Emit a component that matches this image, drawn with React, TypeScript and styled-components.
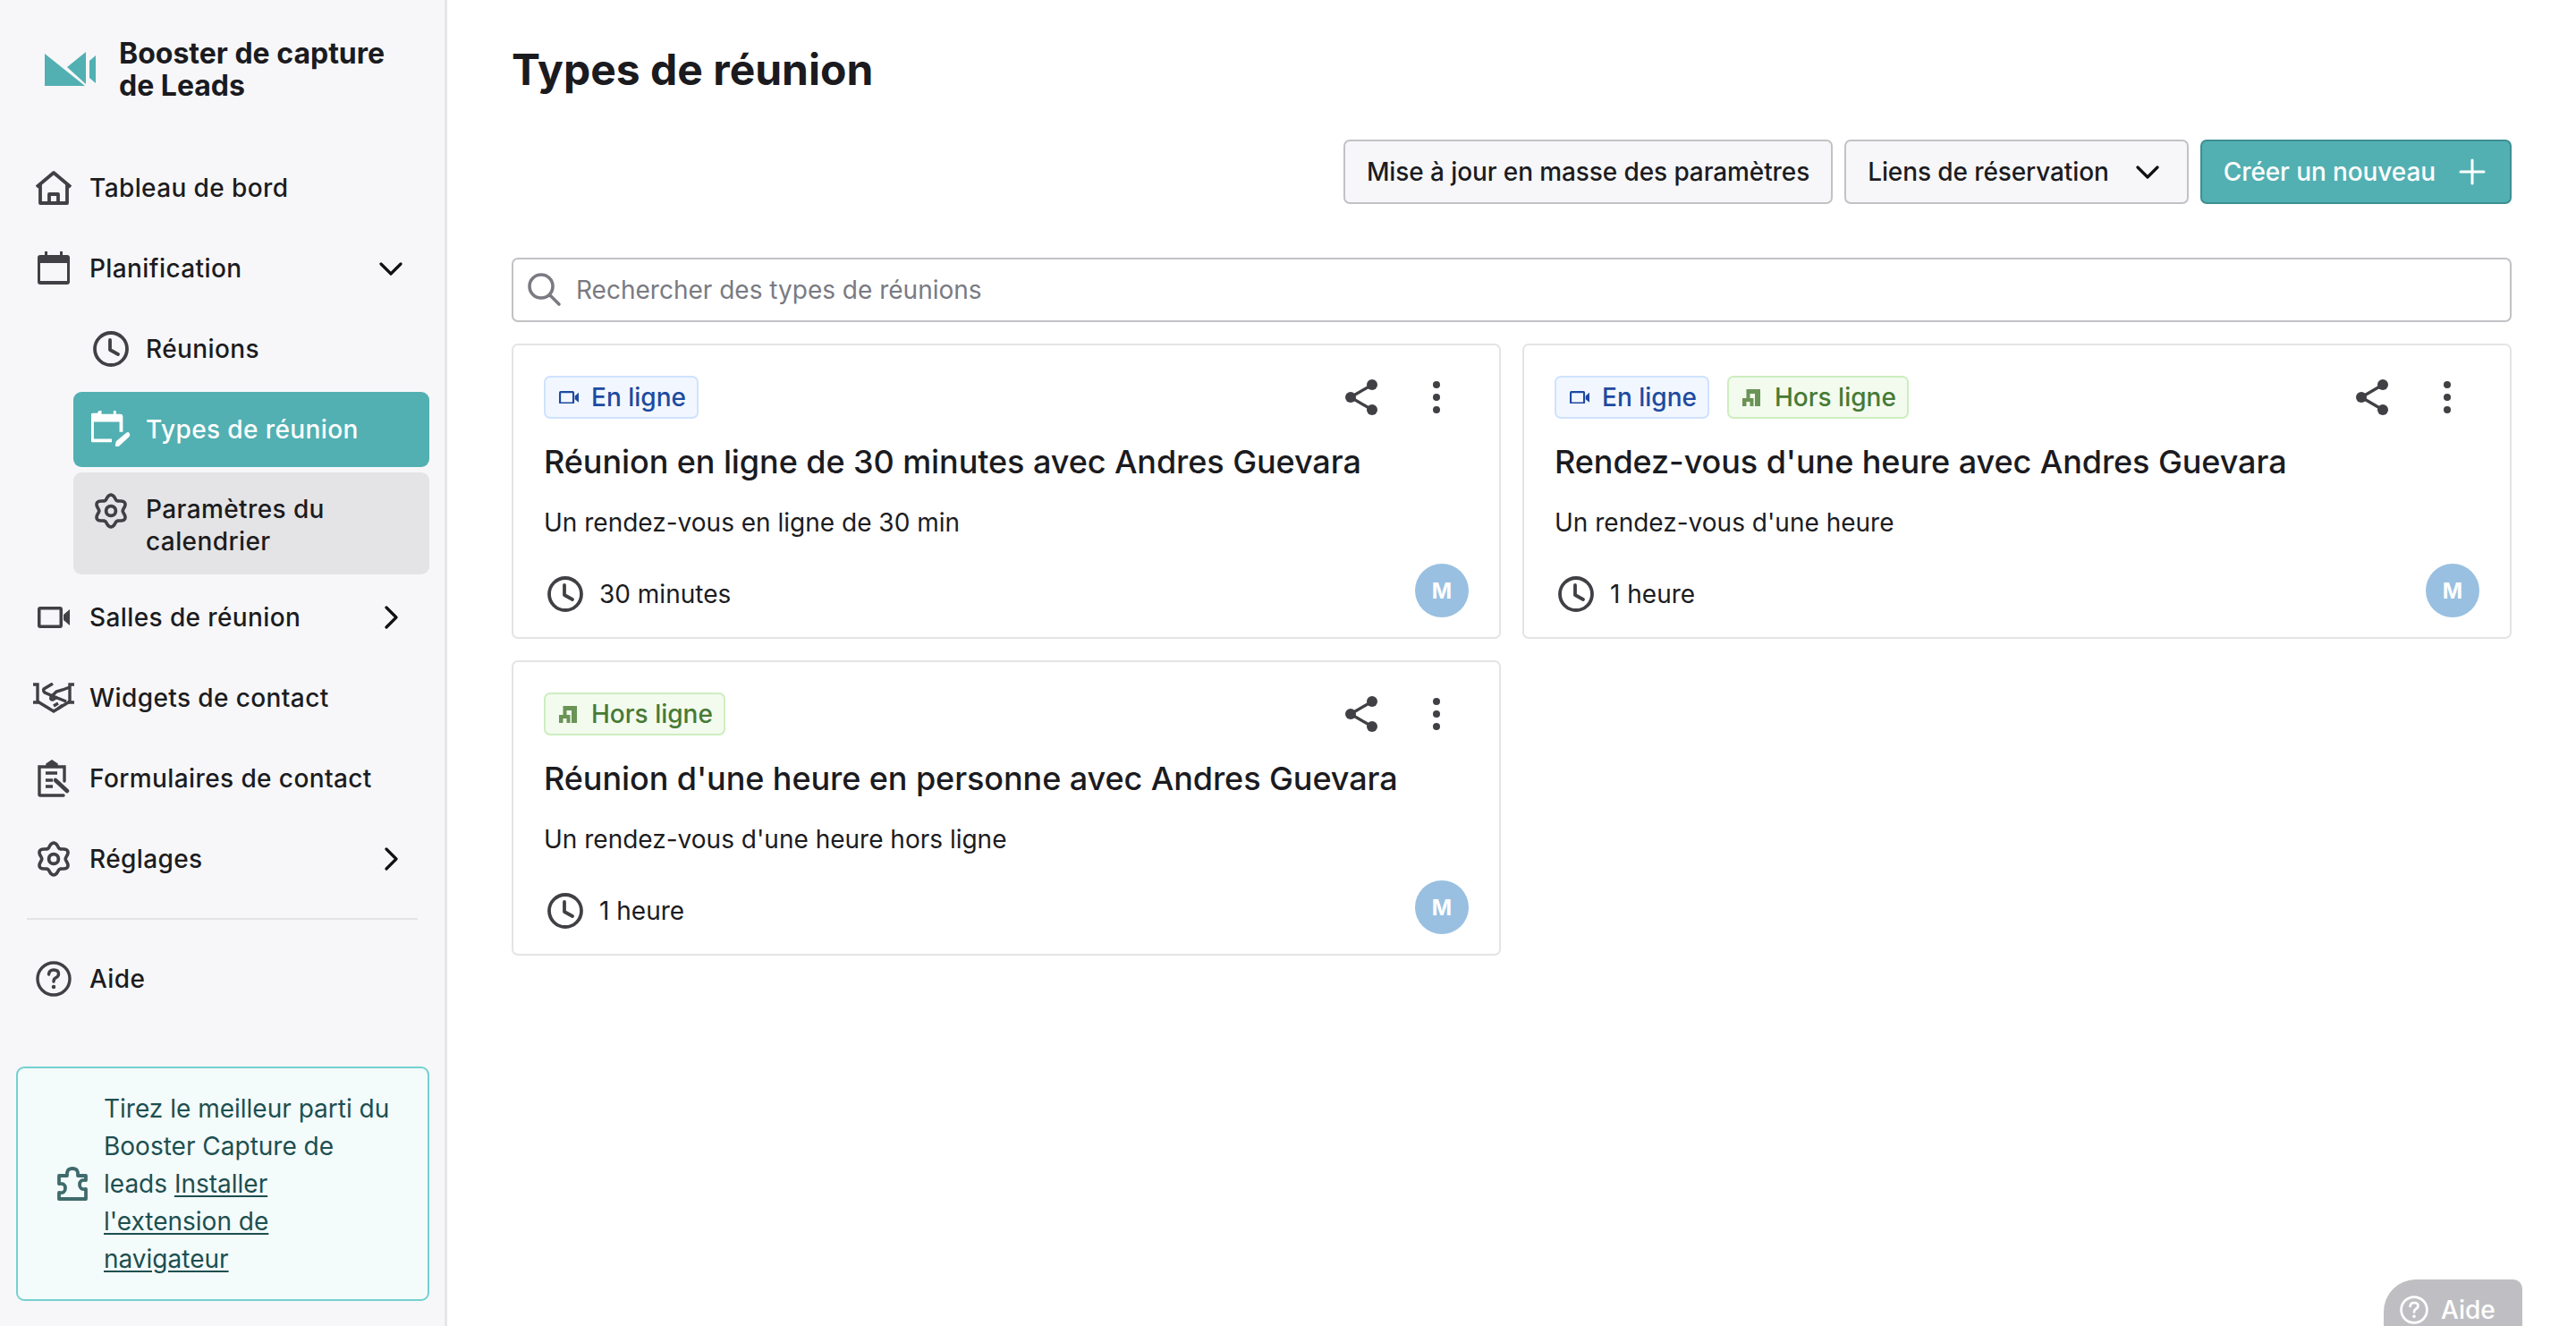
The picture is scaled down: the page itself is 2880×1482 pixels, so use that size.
import React from "react";
import styled, { createGlobalStyle } from "styled-components";

const GlobalStyle = createGlobalStyle`
  html, body {
    margin: 0;
    padding: 0;
    background: #fff;
    overflow: hidden;
  }
  body {
    font-family: Inter, "Noto Sans", "Liberation Sans", sans-serif;
    color: #1c1c1f;
  }
  * { box-sizing: border-box; }
`;

const Page = styled.div`
  display: grid;
  grid-template-columns: 500px 1fr;
  width: 2880px;
  height: 1482px;
`;

/* Sidebar */

const Sidebar = styled.aside`
  background: #f7f7f9;
  border-right: 3px solid #e6e6e8;
  height: 1482px;
  overflow: hidden;
`;
const Brand = styled.div`
  display: flex;
  align-items: center;
  gap: 25px;
  height: 156px;
  padding-left: 50px;
`;
const BrandName = styled.div`
  width: 330px;
  font-size: 32px;
  line-height: 36px;
  font-weight: 700;
  color: #1b1b1f;
`;
const NavList = styled.nav`
  padding-top: 9px;
`;
const NavRow = styled.div`
  display: flex;
  align-items: center;
  height: 90px;
  padding: 0 30px;
  font-size: 28px;
  letter-spacing: 0.4px;
  font-weight: 500;
`;
const IconSlot = styled.span`
  display: flex;
  justify-content: center;
  align-items: center;
  flex: 0 0 60px;
  width: 60px;
  margin-right: 10px;
  color: #404045;
`;
const NavLabel = styled.span`
  flex: 1;
`;
const Chevron = styled.svg`
  width: 26px;
  height: 26px;
  margin-right: 17px;
  fill: none;
  stroke: #111114;
  stroke-width: 3.2;
  stroke-linecap: round;
  stroke-linejoin: round;
`;
const SubMenu = styled.div`
  display: flex;
  flex-direction: column;
  gap: 6px;
  margin: 3px 17px 3px 82px;
`;
const SubItem = styled.div<{ $state?: "active" | "muted" }>`
  display: flex;
  align-items: ${({ $state }) => ($state === "muted" ? "flex-start" : "center")};
  height: ${({ $state }) => ($state === "muted" ? "114px" : "84px")};
  padding: ${({ $state }) => ($state === "muted" ? "23px" : "0")} 20px 0 16px;
  border-radius: 9px;
  font-size: 28px;
  letter-spacing: 0.4px;
  line-height: 36px;
  font-weight: 500;
  background: ${({ $state }) =>
    $state === "active" ? "#52b0b2" : $state === "muted" ? "#e4e4e6" : "transparent"};
  color: ${({ $state }) => ($state === "active" ? "#fff" : "#1c1c1f")};
`;
const SubIcon = styled.span<{ $light?: boolean }>`
  display: flex;
  justify-content: center;
  flex: 0 0 52px;
  width: 52px;
  margin-right: 13px;
  color: ${({ $light }) => ($light ? "#fff" : "#404045")};
`;
const Divider = styled.hr`
  border: 0;
  height: 2px;
  margin: 21px 30px;
  background: #e4e4e6;
`;
const PromoBox = styled.div`
  display: flex;
  align-items: center;
  width: 462px;
  height: 262px;
  margin: 53px 0 0 18px;
  padding-left: 44px;
  background: #f3fbfb;
  border: 2px solid #74d0d0;
  border-radius: 9px;
  color: #1d4f50;
`;
const PromoIcon = styled.span`
  flex: 0 0 36px;
  display: flex;
  margin-right: 16px;
`;
const PromoText = styled.div`
  width: 326px;
  font-size: 28px;
  line-height: 42px;
  a {
    color: inherit;
    text-decoration: underline;
    text-underline-offset: 3px;
  }
`;

/* Main area */

const Main = styled.main`
  padding: 0 72px 0 72px;
`;
const Title = styled.h1`
  margin: 0;
  padding-top: 43px;
  height: 156px;
  font-size: 48px;
  line-height: 70px;
  font-weight: 700;
  color: #1b1b1f;
`;
const Toolbar = styled.div`
  display: flex;
  justify-content: flex-end;
  gap: 13px;
  height: 72px;
`;
const ToolButton = styled.button<{ $primary?: boolean }>`
  display: flex;
  align-items: center;
  height: 72px;
  padding: 0 24px;
  font-family: inherit;
  font-size: 28px;
  letter-spacing: -0.1px;
  font-weight: 500;
  border-radius: 7px;
  border: 2px solid ${({ $primary }) => ($primary ? "#3d8f91" : "#c2c2c6")};
  background: ${({ $primary }) => ($primary ? "#52b0b2" : "#f7f7f9")};
  color: ${({ $primary }) => ($primary ? "#fff" : "#1c1c1f")};
`;
const ButtonIcon = styled.span<{ $wide?: boolean }>`
  display: flex;
  margin-left: ${({ $wide }) => ($wide ? "30px" : "26px")};
  svg {
    margin-right: ${({ $wide }) => ($wide ? "7px" : "3px")};
  }
`;
const SearchBar = styled.div`
  display: flex;
  align-items: center;
  gap: 16px;
  height: 72px;
  margin-top: 60px;
  padding-left: 16px;
  border: 2px solid #c2c2c6;
  border-radius: 7px;
  font-size: 28px;
  color: #7a7a82;
`;
const CardGrid = styled.section`
  display: grid;
  grid-template-columns: 1106px 1106px;
  gap: 24px;
  margin-top: 24px;
`;
const Card = styled.article`
  position: relative;
  height: 330px;
  padding: 34px 34px 0 34px;
  border: 2px solid #e4e4e6;
  border-radius: 7px;
  background: #fff;
`;
const CardHead = styled.div`
  display: flex;
  align-items: center;
  height: 48px;
`;
const Tags = styled.div`
  display: flex;
  gap: 20px;
  flex: 1;
`;
const Tag = styled.span<{ $tone: "blue" | "green" }>`
  display: inline-flex;
  align-items: center;
  gap: ${({ $tone }) => ($tone === "blue" ? "14px" : "16px")};
  height: 48px;
  padding: 0 12px 0 15px;
  font-size: 28px;
  font-weight: 500;
  border-radius: 7px;
  border: 2px solid ${({ $tone }) => ($tone === "blue" ? "#cfe2ff" : "#cdeebf")};
  background: ${({ $tone }) => ($tone === "blue" ? "#f2f7ff" : "#f3fbef")};
  color: ${({ $tone }) => ($tone === "blue" ? "#1e4aa0" : "#477a34")};
`;
const HeadActions = styled.div`
  display: flex;
  align-items: center;
  gap: 62px;
  margin-right: 32px;
  color: #404045;
`;
const CardTitle = styled.h2`
  margin: 23px 0 0;
  font-size: 36px;
  letter-spacing: -0.08px;
  line-height: 50px;
  font-weight: 500;
  color: #1b1b1f;
`;
const CardDesc = styled.p`
  margin: 23px 0 0;
  font-size: 28px;
  line-height: 40px;
  color: #1c1c1f;
`;
const Duration = styled.div`
  display: flex;
  align-items: center;
  gap: 18px;
  margin-top: 40px;
  padding-left: 4px;
  font-size: 28px;
  line-height: 40px;
  color: #404045;
`;
const DurationText = styled.span`
  color: #1c1c1f;
`;
const Avatar = styled.span`
  position: absolute;
  right: 34px;
  bottom: 22px;
  display: flex;
  align-items: center;
  justify-content: center;
  width: 60px;
  height: 60px;
  border-radius: 50%;
  background: #99c0e1;
  color: #fff;
  font-size: 24px;
  font-weight: 700;
`;
const HelpFab = styled.div`
  position: fixed;
  left: 2665px;
  top: 1430px;
  display: flex;
  align-items: center;
  gap: 14px;
  width: 155px;
  height: 68px;
  padding: 0 0 0 18px;
  border-radius: 36px 10px 0 0;
  background: #bfbfc3;
  color: #fff;
  font-size: 28px;
  font-weight: 500;
`;

/* Icons, drawn to follow the reference */

type IconProps = { size?: number };

const Line = styled.svg`
  fill: none;
  stroke: currentColor;
  stroke-width: 3;
  stroke-linecap: round;
  stroke-linejoin: round;
`;

// six lobed outline for the settings gear
const gearPoints = Array.from({ length: 72 }, (_, i) => {
  const angle = (i / 72) * Math.PI * 2;
  const radius = 15.6 + 2.4 * Math.cos(6 * angle);
  const x = 20 + radius * Math.sin(angle);
  const y = 20 - radius * Math.cos(angle);
  return `${x.toFixed(2)},${y.toFixed(2)}`;
}).join(" ");

const Logo = () => (
  <svg width="58" height="40" viewBox="0 0 58 40">
    <path d="M0 2 L45 38 L0 38Z" fill="#52b0b2" />
    <path d="M25 17 L46 0 L46 36Z" fill="#52b0b2" />
    <path d="M50 10 L57 4 L57 35 L50 29Z" fill="#52b0b2" />
  </svg>
);
const HomeIcon = () => (
  <Line width="42" height="38" viewBox="0 0 42 38">
    <path d="M2 18 L21 2 L40 18" strokeWidth="3.8" strokeLinecap="butt" />
    <path d="M6 15 V36 H36 V15" strokeWidth="3.8" strokeLinecap="butt" />
    <path d="M16 35 V26 H26 V35" strokeWidth="3.8" strokeLinecap="butt" />
  </Line>
);
const CalendarIcon = () => (
  <svg width="38" height="38" viewBox="0 0 38 38">
    <path
      d="M9 0 h3 v4 h14 v-4 h3 v4 h5 a3 3 0 0 1 3 3 v27 a3 3 0 0 1 -3 3 h-30 a3 3 0 0 1 -3 -3 v-27 a3 3 0 0 1 3 -3 h5z M4 13 v20 h30 v-20z"
      fill="currentColor"
      fillRule="evenodd"
    />
  </svg>
);
const CalendarEditIcon = () => (
  <svg width="44" height="42" viewBox="0 0 46 44">
    <path
      d="M9 0 h3 v4 h14 v-4 h3 v4 h5 a3 3 0 0 1 3 3 v18 h-4 v-12 h-30 v20 h21 v4 h-22 a3 3 0 0 1 -3 -3 v-28 a3 3 0 0 1 3 -3 h5z"
      fill="currentColor"
    />
    <path d="M28 41 L29 36 L41 26 Q44 24 45 27 Q46 29 44 31 L33 41 Q30 43 28 41Z" fill="currentColor" />
  </svg>
);
const ClockIcon = ({ size = 40 }: IconProps) => (
  <Line width={size} height={size} viewBox="0 0 40 40">
    <circle cx="20" cy="20" r="18" strokeWidth="3.8" />
    <path d="M19 10 V21 L28 26" strokeWidth="3.8" />
  </Line>
);
const GearIcon = () => (
  <Line width="40" height="40" viewBox="0 0 40 40">
    <polygon points={gearPoints} strokeWidth="3.6" />
    <circle cx="20" cy="20" r="5.4" strokeWidth="3.8" />
  </Line>
);
const VideoIcon = ({ size = 36 }: IconProps) => (
  <svg width={size} height={(size * 24) / 36} viewBox="0 0 36 24">
    <path
      d="M3 0 h22 a3 3 0 0 1 3 3 v18 a3 3 0 0 1 -3 3 h-22 a3 3 0 0 1 -3 -3 v-18 a3 3 0 0 1 3 -3z M3.500 3.500 v17 h21 v-17z"
      fill="currentColor"
      fillRule="evenodd"
    />
    <path d="M29 9 L36 3 V21 L29 15Z" fill="currentColor" />
  </svg>
);
const HandshakeIcon = () => (
  <Line width="48" height="34" viewBox="0 0 48 34">
    <g strokeWidth="3.4" strokeLinecap="butt" strokeLinejoin="miter">
      <path d="M1 2 H6 V22 H1" />
      <path d="M47 2 H42 V22 H47" />
      <path d="M6 21 L24 32 L42 21" />
      <path d="M23 1 L13 7 Q12 9 14 11 L23 15 L38 21" />
      <path d="M42 5 L34 8 L27 10 L21 16 Q20 19 23 19 L28 16" />
      <path d="M24 26 L29 23 M29 29 L34 25" />
    </g>
  </Line>
);
const FormIcon = () => (
  <svg width="36" height="42" viewBox="0 0 36 42" fill="none" stroke="currentColor" strokeWidth="3.400">
    <path d="M9 8 H2 V39 a1 1 0 0 0 1 1 H29" strokeLinecap="round" />
    <path d="M23 8 H30 V24" strokeLinecap="round" />
    <path d="M10 9 V5 L16 1 L22 5 V9 H10Z" fill="currentColor" strokeWidth="1.500" />
    <path d="M9 15 H22 M9 23 H17 M9 30 H17" strokeWidth="3.400" />
    <path d="M20 23 L33 35" strokeWidth="4.500" strokeLinecap="round" />
  </svg>
);
const HelpCircle = ({ size = 40 }: IconProps) => (
  <Line width={size} height={size} viewBox="0 0 40 40">
    <circle cx="20" cy="20" r="18" strokeWidth="3.400" />
    <path d="M14.500 15 Q15 10 20 10 Q25.500 10 25.500 14.500 Q25.500 17.500 22 19 Q20 20 20 23" strokeWidth="3.400" />
    <circle cx="20" cy="29" r="1.500" fill="currentColor" strokeWidth="1.500" />
  </Line>
);
const PuzzleIcon = () => (
  <svg width="34" height="38" viewBox="0 0 34 38" fill="none" stroke="#3f6b6c" strokeWidth="3.800" strokeLinejoin="round">
    <path d="M2 10 H11 Q10 2 17 2 Q24 2 23 10 H32 V15 Q25 14 25 20 Q25 26 32 25 V36 H2 V29 Q9 30 9 24 Q9 18 2 19Z" />
  </svg>
);
const ShareIcon = () => (
  <svg width="36" height="40" viewBox="0 0 36 40" fill="#404045">
    <circle cx="6" cy="20" r="6" />
    <circle cx="30" cy="6" r="6" />
    <circle cx="30" cy="34" r="6" />
    <path d="M6 20 L30 6 M6 20 L30 34" stroke="#404045" strokeWidth="3.200" />
  </svg>
);
const MoreIcon = () => (
  <svg width="8" height="36" viewBox="0 0 8 36" fill="#404045">
    <circle cx="4" cy="4" r="4" />
    <circle cx="4" cy="18" r="4" />
    <circle cx="4" cy="32" r="4" />
  </svg>
);
const OfflineIcon = () => (
  <svg width="20" height="19" viewBox="0 0 20 19" fill="#6a9455">
    <path d="M4.500 0 H20 V19 H14 V5 H8.500 V10 H12.500 V19 H8.500 V14 H4.500 V19 H0 V10 H4.500Z" />
  </svg>
);
const SearchIcon = () => (
  <svg width="38" height="38" viewBox="0 0 38 38" fill="none" stroke="#7a7a82" strokeWidth="3.600" strokeLinecap="round">
    <circle cx="15" cy="15" r="13" />
    <path d="M25 25 L35 35" />
  </svg>
);

const ChevronDown = () => (
  <Chevron viewBox="0 0 26 26">
    <path d="M2 8 L13 19 L24 8" />
  </Chevron>
);
const ChevronRight = () => (
  <Chevron viewBox="0 0 26 26">
    <path d="M8 2 L19 13 L8 24" />
  </Chevron>
);

/* Data */

type Mode = "online" | "offline";

const meetings: { title: string; desc: string; duration: string; modes: Mode[] }[] = [
  {
    title: "Réunion en ligne de 30 minutes avec Andres Guevara",
    desc: "Un rendez-vous en ligne de 30 min",
    duration: "30 minutes",
    modes: ["online"],
  },
  {
    title: "Rendez-vous d'une heure avec Andres Guevara",
    desc: "Un rendez-vous d'une heure",
    duration: "1 heure",
    modes: ["online", "offline"],
  },
  {
    title: "Réunion d'une heure en personne avec Andres Guevara",
    desc: "Un rendez-vous d'une heure hors ligne",
    duration: "1 heure",
    modes: ["offline"],
  },
];

const MeetingCard = ({ title, desc, duration, modes }: (typeof meetings)[number]) => (
  <Card>
    <CardHead>
      <Tags>
        {modes.map((mode) =>
          mode === "online" ? (
            <Tag key={mode} $tone="blue">
              <VideoIcon size={22} />
              En ligne
            </Tag>
          ) : (
            <Tag key={mode} $tone="green">
              <OfflineIcon />
              Hors ligne
            </Tag>
          )
        )}
      </Tags>
      <HeadActions>
        <ShareIcon />
        <MoreIcon />
      </HeadActions>
    </CardHead>
    <CardTitle>{title}</CardTitle>
    <CardDesc>{desc}</CardDesc>
    <Duration>
      <ClockIcon />
      <DurationText>{duration}</DurationText>
    </Duration>
    <Avatar>M</Avatar>
  </Card>
);

export default function App() {
  return (
    <Page>
      <GlobalStyle />
      <Sidebar>
        <Brand>
          <Logo />
          <BrandName>Booster de capture de Leads</BrandName>
        </Brand>
        <NavList>
          <NavRow>
            <IconSlot><HomeIcon /></IconSlot>
            <NavLabel>Tableau de bord</NavLabel>
          </NavRow>
          <NavRow>
            <IconSlot><CalendarIcon /></IconSlot>
            <NavLabel>Planification</NavLabel>
            <ChevronDown />
          </NavRow>
          <SubMenu>
            <SubItem>
              <SubIcon><ClockIcon /></SubIcon>
              Réunions
            </SubItem>
            <SubItem $state="active">
              <SubIcon $light><CalendarEditIcon /></SubIcon>
              Types de réunion
            </SubItem>
            <SubItem $state="muted">
              <SubIcon><GearIcon /></SubIcon>
              Paramètres du calendrier
            </SubItem>
          </SubMenu>
          <NavRow>
            <IconSlot><VideoIcon /></IconSlot>
            <NavLabel>Salles de réunion</NavLabel>
            <ChevronRight />
          </NavRow>
          <NavRow>
            <IconSlot><HandshakeIcon /></IconSlot>
            <NavLabel>Widgets de contact</NavLabel>
          </NavRow>
          <NavRow>
            <IconSlot><FormIcon /></IconSlot>
            <NavLabel>Formulaires de contact</NavLabel>
          </NavRow>
          <NavRow>
            <IconSlot><GearIcon /></IconSlot>
            <NavLabel>Réglages</NavLabel>
            <ChevronRight />
          </NavRow>
          <Divider />
          <NavRow>
            <IconSlot><HelpCircle /></IconSlot>
            <NavLabel>Aide</NavLabel>
          </NavRow>
        </NavList>
        <PromoBox>
          <PromoIcon><PuzzleIcon /></PromoIcon>
          <PromoText>
            Tirez le meilleur parti du Booster Capture de leads{" "}
            <a href="#extension">Installer l'extension de navigateur</a>
          </PromoText>
        </PromoBox>
      </Sidebar>
      <Main>
        <Title>Types de réunion</Title>
        <Toolbar>
          <ToolButton>Mise à jour en masse des paramètres</ToolButton>
          <ToolButton>
            Liens de réservation
            <ButtonIcon $wide><ChevronDown /></ButtonIcon>
          </ToolButton>
          <ToolButton $primary>
            Créer un nouveau
            <ButtonIcon>
              <svg width="30" height="30" viewBox="0 0 30 30" stroke="#fff" strokeWidth="3" strokeLinecap="round">
                <path d="M15 2 V28 M2 15 H28" />
              </svg>
            </ButtonIcon>
          </ToolButton>
        </Toolbar>
        <SearchBar>
          <SearchIcon />
          Rechercher des types de réunions
        </SearchBar>
        <CardGrid>
          {meetings.map((meeting) => (
            <MeetingCard key={meeting.title} {...meeting} />
          ))}
        </CardGrid>
      </Main>
      <HelpFab>
        <HelpCircle size={32} />
        Aide
      </HelpFab>
    </Page>
  );
}
